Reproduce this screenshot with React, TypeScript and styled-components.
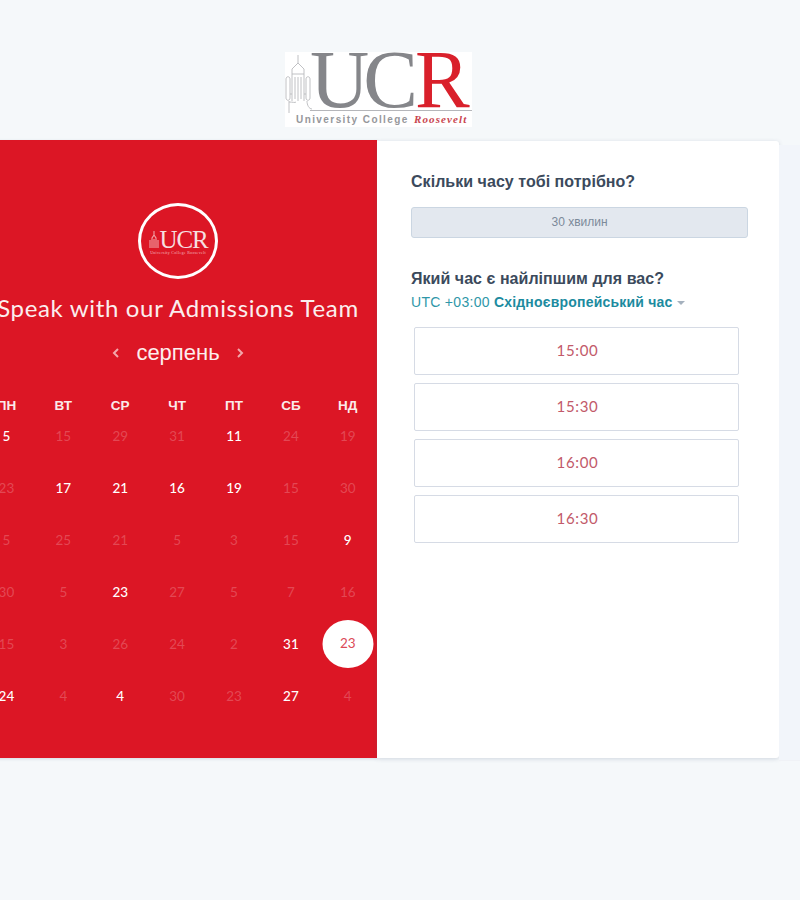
import React from 'react';
import styled, { createGlobalStyle } from 'styled-components';

const Global = createGlobalStyle`
  html, body { margin: 0; padding: 0; background: #f5f8fa; overflow: hidden; }
  * { box-sizing: border-box; }
`;

const Page = styled.div`
  width: 800px;
  height: 900px;
  overflow: hidden;
  background: #f5f8fa;
  padding-top: 52px;
  font-family: "Liberation Sans", Arial, sans-serif;
`;

const LogoRow = styled.div`
  display: flex;
  padding-left: 285px;
  height: 88px;
`;

const Logo = styled.div`
  width: 187px;
  height: 75px;
  background: #fff;
  display: grid;
  grid-template-columns: 27px 1fr;
  grid-template-rows: 58px 17px;
  overflow: hidden;
`;

const LogoLetters = styled.div`
  font-family: "Liberation Serif", serif;
  font-size: 82px;
  line-height: 56px;
  height: 59px;
  letter-spacing: -6px;
  color: #85868a;
  white-space: nowrap;
  border-bottom: 1px solid #b5b6ba;
  margin-left: -2px;
  overflow: hidden;
  & > b { font-weight: 400; color: #d9202b; letter-spacing: 0; margin-left: 3px; }
`;

const LogoTower = styled.svg`
  width: 27px;
  height: 62px;
  fill: none;
  stroke: #b9babd;
  stroke-width: 0.9;
`;

const LogoCaption = styled.div`
  grid-column: 1 / span 2;
  font-size: 10px;
  font-weight: 700;
  letter-spacing: 1.42px;
  color: #96979b;
  white-space: nowrap;
  padding: 3px 0 0 11px;
  line-height: 13px;
  & > i {
    font-family: "Liberation Serif", serif;
    font-size: 11px;
    color: #c9454f;
    letter-spacing: 1.1px;
    margin-left: 1px;
  }
`;

const Shell = styled.div`
  display: flex;
  align-items: stretch;
  margin-left: -25px;
  width: 825px;
`;

const Card = styled.div`
  width: 804px;
  height: 618px;
  display: flex;
  flex: none;
`;

const Strip = styled.div`
  flex: 1;
  height: 616px;
  margin-top: 5px;
  background: #f2f5fa;
  border-bottom: 1px solid #f0f2f6;
`;

const RedPanel = styled.section`
  width: 402px;
  flex: none;
  background: #dc1625;
  color: #fff;
  display: flex;
  flex-direction: column;
  align-items: center;
  padding: 63px 0 0 4px;
  box-shadow: 0 1px 3px rgba(80, 100, 130, 0.2);
`;

const Badge = styled.div`
  width: 80px;
  height: 76px;
  border: 3px solid #fff;
  border-radius: 50%;
  display: flex;
  flex-direction: column;
  align-items: center;
  justify-content: center;
  flex: none;
`;

const BadgeMark = styled.div`
  display: flex;
  align-items: flex-end;
  font-family: "Liberation Serif", serif;
  font-size: 25px;
  line-height: 19px;
  letter-spacing: -1.2px;
  color: #f6dfe0;
  margin-top: 3px;
`;

const BadgeTower = styled.svg`
  width: 10px;
  height: 18px;
  fill: none;
  stroke: #f0a3a8;
  stroke-width: 1.1;
  margin-right: 1px;
`;

const BadgeCaption = styled.div`
  font-family: "Liberation Serif", serif;
  font-size: 4px;
  line-height: 5px;
  letter-spacing: 0.3px;
  margin-top: 1px;
  color: #f3b9bd;
  white-space: nowrap;
`;

const Title = styled.h1`
  margin: 14px 0 0;
  font-family: Lato, sans-serif;
  font-weight: 400;
  font-size: 24px;
  line-height: 30px;
  letter-spacing: 0.66px;
  white-space: nowrap;
  color: #fbeeee;
`;

const MonthRow = styled.div`
  display: flex;
  align-items: center;
  justify-content: center;
  gap: 15px;
  margin-top: 15px;
  height: 30px;
`;

const Chevron = styled.svg`
  width: 10px;
  height: 12px;
  fill: none;
  stroke: #f3a6ab;
  stroke-width: 2;
`;

const Month = styled.span`
  font-size: 22px;
  line-height: 30px;
  color: #fdeeee;
`;

const WeekRow = styled.div`
  display: grid;
  grid-template-columns: repeat(7, 56.9px);
  margin: 30px 0 8px -1px;
  align-self: flex-start;
`;

const WeekHead = styled.div`
  font-size: 13.5px;
  line-height: 16px;
  font-weight: 700;
  color: #fbeaea;
  text-align: center;
`;

const DayGrid = styled.div`
  display: grid;
  grid-template-columns: repeat(7, 56.9px);
  grid-auto-rows: 28px;
  row-gap: 24px;
  margin-left: -1px;
  align-self: flex-start;
`;

const Day = styled.div<{ $on?: boolean; $picked?: boolean }>`
  display: flex;
  align-items: center;
  justify-content: center;
  font-family: Lato, sans-serif;
  font-size: 13.5px;
  font-weight: ${p => (p.$on ? 500 : 400)};
  position: relative;
  color: ${p => (p.$picked ? '#dc4a57' : p.$on ? '#fff' : 'rgba(255,255,255,0.22)')};
  ${p =>
    p.$picked &&
    `&::before {
      content: '';
      position: absolute;
      left: 50%;
      top: 50%;
      width: 51px;
      height: 48px;
      transform: translate(-50%, -50%);
      border-radius: 50%;
      background: #fff;
    }
    & > span { position: relative; top: -1px; }`}
`;

const RightPanel = styled.section`
  flex: 1;
  margin-top: 1px;
  background: #fff;
  padding: 31px 31px 0 34px;
  color: #33475b;
  border-radius: 0 3px 3px 0;
  box-shadow: 0 1px 4px rgba(80, 100, 130, 0.22);
`;

const Question = styled.h2`
  margin: 0;
  font-size: 16px;
  line-height: 20px;
  font-weight: 700;
  color: #3b4a5c;
  letter-spacing: 0.04px;
  white-space: nowrap;
`;

const Duration = styled.div`
  width: 337px;
  height: 31px;
  margin: 15px 0 31px;
  padding-bottom: 2px;
  background: #e3e8ef;
  border: 1px solid #cbd6e2;
  border-radius: 3px;
  display: flex;
  align-items: center;
  justify-content: center;
  font-size: 12px;
  color: #7c8a9a;
`;

const Zone = styled.div`
  display: flex;
  align-items: center;
  margin-top: 3px;
  height: 20px;
  font-size: 14px;
  letter-spacing: 0.3px;
  color: #2f97a8;
  white-space: nowrap;
  & > b { font-weight: 700; color: #1c8b9f; margin-left: 4px; letter-spacing: 0.2px; }
`;

const Caret = styled.span`
  width: 0;
  height: 0;
  margin-left: 5px;
  margin-top: 2px;
  border-left: 4px solid transparent;
  border-right: 4px solid transparent;
  border-top: 4px solid #a5b1be;
`;

const Slots = styled.div`
  display: flex;
  flex-direction: column;
  gap: 8px;
  margin: 15px 0 0 3px;
  width: 325px;
`;

const Slot = styled.button`
  width: 325px;
  height: 48px;
  padding: 0 0 2px 2px;
  background: #fff;
  border: 1px solid #d6dbe5;
  border-radius: 2px;
  font-family: Lato, sans-serif;
  font-size: 15px;
  letter-spacing: 0.65px;
  color: #c25a6a;
`;

const weekdays = ['ПН', 'ВТ', 'СР', 'ЧТ', 'ПТ', 'СБ', 'НД'];
const rows: [string, boolean?, boolean?][][] = [
  [['5', true], ['15'], ['29'], ['31'], ['11', true], ['24'], ['19']],
  [['23'], ['17', true], ['21', true], ['16', true], ['19', true], ['15'], ['30']],
  [['5'], ['25'], ['21'], ['5'], ['3'], ['15'], ['9', true]],
  [['30'], ['5'], ['23', true], ['27'], ['5'], ['7'], ['16']],
  [['15'], ['3'], ['26'], ['24'], ['2'], ['31', true], ['23', false, true]],
  [['24', true], ['4'], ['4', true], ['30'], ['23'], ['27', true], ['4']],
];
const slots = ['15:00', '15:30', '16:00', '16:30'];

export default function App() {
  return (
    <Page>
      <Global />
      <LogoRow>
        <Logo>
          <LogoTower viewBox="0 0 27 62">
            <path d="M13 3v8l-3 3-3 3v32M13 11l3 3 3 3v32" />
            <path d="M7 22h12M10 25v22M16 25v22M13 25v24" />
            <path d="M1 27c0-3 4-3 4 0v19c0 3-4 3-4 0zM21 27c0-3 4-3 4 0v19c0 3-4 3-4 0z" />
            <path d="M5 42h2M19 42h2M4 49v12M4 50c4 0 6 1 7 0M22 49c0 4 2 8 5 8" />
          </LogoTower>
          <LogoLetters>UC<b>R</b></LogoLetters>
          <LogoCaption>University College <i>Roosevelt</i></LogoCaption>
        </Logo>
      </LogoRow>
      <Shell>
        <Card>
          <RedPanel>
            <Badge>
              <BadgeMark>
                <BadgeTower viewBox="0 0 10 18">
                  <path d="M5 0v4L3 7v10M5 4l2 3v10M1 9v8M9 9v8M5 8v9" />
                </BadgeTower>
                UCR
              </BadgeMark>
              <BadgeCaption>University College Roosevelt</BadgeCaption>
            </Badge>
            <Title>Speak with our Admissions Team</Title>
            <MonthRow>
              <Chevron viewBox="0 0 10 12"><path d="M7 2 3 6l4 4" /></Chevron>
              <Month>серпень</Month>
              <Chevron viewBox="0 0 10 12"><path d="m3 2 4 4-4 4" /></Chevron>
            </MonthRow>
            <WeekRow>
              {weekdays.map(w => <WeekHead key={w}>{w}</WeekHead>)}
            </WeekRow>
            <DayGrid>
              {rows.flat().map(([n, on, picked], i) => (
                <Day key={i} $on={on} $picked={picked}><span>{n}</span></Day>
              ))}
            </DayGrid>
          </RedPanel>
          <RightPanel>
            <Question>Скільки часу тобі потрібно?</Question>
            <Duration>30 хвилин</Duration>
            <Question>Який час є найліпшим для вас?</Question>
            <Zone>UTC +03:00 <b>Східноєвропейський час</b><Caret /></Zone>
            <Slots>
              {slots.map(s => <Slot key={s}>{s}</Slot>)}
            </Slots>
          </RightPanel>
        </Card>
        <Strip />
      </Shell>
    </Page>
  );
}
